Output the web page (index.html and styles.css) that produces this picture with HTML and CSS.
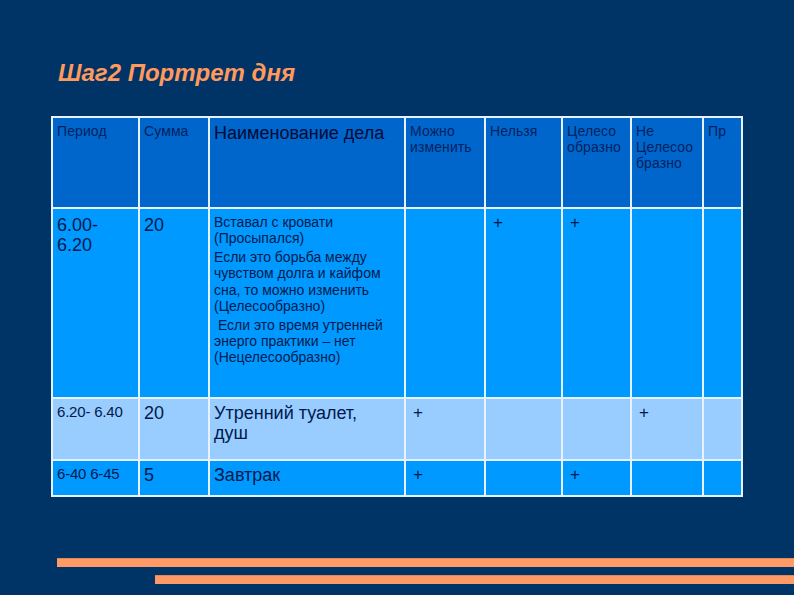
FILE: index.html
```html
<!DOCTYPE html>
<html lang="ru">
<head>
<meta charset="utf-8">
<link rel="stylesheet" href="styles.css">
</head>
<body>
<div class="slide">
  <h1 class="title">Шаг2 Портрет дня</h1>
  <table class="plan">
    <colgroup>
      <col class="c1"><col class="c2"><col class="c3"><col class="c4"><col class="c5"><col class="c6"><col class="c7"><col class="c8">
    </colgroup>
    <tr class="head">
      <td class="sm">Период</td>
      <td class="sm">Сумма</td>
      <td class="big name">Наименование дела</td>
      <td class="sm">Можно изменить</td>
      <td class="sm">Нельзя</td>
      <td class="sm">Целесо образно</td>
      <td class="sm">Не Целесоо бразно</td>
      <td class="sm">Пр</td>
    </tr>
    <tr class="r1">
      <td class="big">6.00-<br>6.20</td>
      <td class="big">20</td>
      <td class="desc name">
        <p>Вставал с кровати (Просыпался)</p>
        <p>Если это борьба между чувством долга и кайфом сна, то можно изменить (Целесообразно)</p>
        <p>&nbsp;Если это время утренней энерго практики – нет (Нецелесообразно)</p>
      </td>
      <td></td>
      <td class="plus">+</td>
      <td class="plus">+</td>
      <td></td>
      <td></td>
    </tr>
    <tr class="r2">
      <td class="time">6.20- 6.40</td>
      <td class="big">20</td>
      <td class="big name">Утренний туалет, душ</td>
      <td class="plus">+</td>
      <td></td>
      <td></td>
      <td class="plus">+</td>
      <td></td>
    </tr>
    <tr class="r3">
      <td class="time">6-40 6-45</td>
      <td class="big">5</td>
      <td class="big name">Завтрак</td>
      <td class="plus">+</td>
      <td></td>
      <td class="plus">+</td>
      <td></td>
      <td></td>
    </tr>
  </table>
  <div class="bars">
    <div class="bar bar-a"></div>
    <div class="bar bar-b"></div>
  </div>
</div>
</body>
</html>
```
FILE: styles.css
```css
html, body {
  margin: 0;
  padding: 0;
  background: #003366;
}
.slide {
  width: 794px;
  height: 595px;
  background: #003366;
  font-family: "Liberation Sans", Arial, sans-serif;
  display: flex;
  flex-direction: column;
  overflow: hidden;
}
.title {
  margin: 58px 0 0 58px;
  font-size: 24px;
  line-height: 30px;
  font-style: italic;
  font-weight: bold;
  color: #ff9a5c;
  height: 30px;
}
.plan {
  margin: 28px 0 0 51px;
  width: 690px;
  table-layout: fixed;
  border-collapse: collapse;
  border: 2px solid #e6f2ff;
}
.plan td {
  border: 2px solid #e6f2ff;
  vertical-align: top;
  padding: 5px 4px 0 4px;
  color: #001a4d;
}
.plan td.name { padding-right: 16px; }
.c1 { width: 87px; }
.c2 { width: 70px; }
.c3 { width: 196px; }
.c4 { width: 80px; }
.c5 { width: 77px; }
.c6 { width: 69px; }
.c7 { width: 72px; }
.c8 { width: 39px; }
.head { height: 91px; background: #0066cc; }
.r1 { height: 190px; background: #0099ff; }
.r2 { height: 62px; background: #99ccff; }
.r3 { height: 36px; background: #0099ff; }
.head td.sm { color: #00225e; }
.sm {
  font-size: 14px;
  line-height: 16px;
  letter-spacing: 0.1px;
}
.big {
  font-size: 18px;
  line-height: 20px;
}
.head .big { color: #000a33; padding-top: 5px; }
.time {
  font-size: 15px;
  line-height: 17px;
  letter-spacing: -0.2px;
}
.desc {
  font-size: 14px;
  line-height: 16.3px;
  padding-top: 3px;
}
.desc p { margin: 0 0 2.5px 0; }
.plan td.plus {
  font-size: 17px;
  line-height: 18px;
  padding-left: 7px;
  padding-top: 5px;
}
.r1 .big { padding-top: 6px; }
.r2 td, .r3 td { padding-top: 4px; }
.bars {
  margin-top: 61px;
  display: flex;
  flex-direction: column;
  gap: 8px;
}
.bar {
  height: 8px;
  background: #ff9966;
  border-top: 1px solid #e08a50;
}
.bar-a { margin-left: 57px; }
.bar-b { margin-left: 155px; }
```
